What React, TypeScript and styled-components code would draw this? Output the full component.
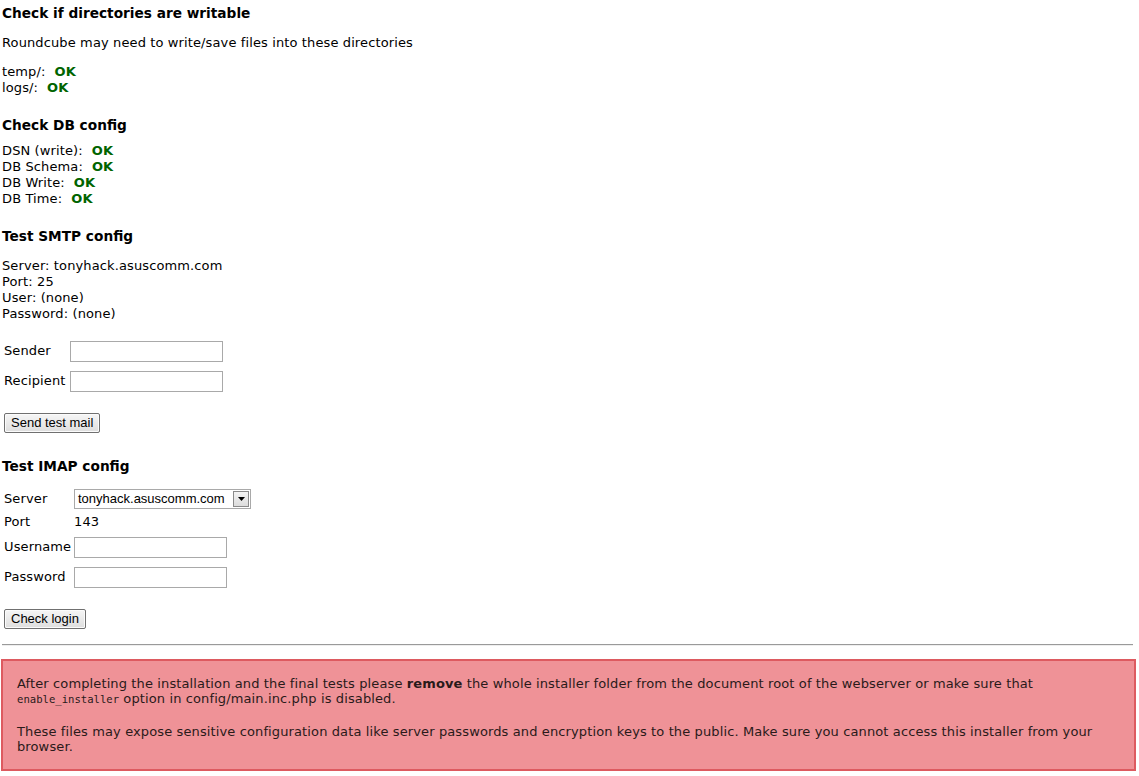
import React from "react";
import styled, { createGlobalStyle } from "styled-components";

const GlobalStyle = createGlobalStyle`
  html, body {
    margin: 0;
    padding: 0;
    background: #fff;
  }
  body {
    font-family: "DejaVu Sans", Verdana, sans-serif;
    font-size: 13px;
    letter-spacing: 0.12px;
    color: #000;
  }
`;

const Page = styled.div`
  padding: 0 2px 6px 1px;
`;

const Heading = styled.h3<{ $top: number; $bottom: number }>`
  margin: ${({ $top }) => $top}px 0 ${({ $bottom }) => $bottom}px 1px;
  font-size: 13.7px;
  letter-spacing: 0;
  line-height: 18px;
  font-weight: bold;
`;

const Para = styled.p<{ $bottom?: number }>`
  margin: 0 0 ${({ $bottom }) => $bottom ?? 0}px 1px;
  line-height: 16px;
`;

const Lines = styled.div`
  margin-left: 1px;
  line-height: 16px;
`;

const Ok = styled.span`
  color: #006400;
  font-weight: bold;
  margin-left: 9px;
`;

const FormTable = styled.table<{ $top: number }>`
  border-collapse: separate;
  border-spacing: 2px;
  margin-top: ${({ $top }) => $top}px;
  margin-left: 0;
`;

const LabelCell = styled.td<{ $w: number; $h: number }>`
  width: ${({ $w }) => $w}px;
  height: ${({ $h }) => $h}px;
  padding: 0 0 0 1px;
  vertical-align: middle;
  white-space: nowrap;
  line-height: 16px;
`;

const FieldCell = styled.td`
  padding: 0;
  vertical-align: middle;
  line-height: 16px;
`;

const TextInput = styled.input`
  box-sizing: border-box;
  width: 153px;
  height: 21px;
  border: 1px solid #a9a9a9;
  padding: 1px 3px;
  font-family: "Liberation Sans", Arial, sans-serif;
  font-size: 13px;
  margin: 0;
  background: #fff;
`;

const SelectBox = styled.div`
  display: inline-flex;
  align-items: center;
  box-sizing: border-box;
  width: 177px;
  height: 20px;
  border: 1px solid #a9a9a9;
  background: #fff;
  font-family: "Liberation Sans", Arial, sans-serif;
  font-size: 13px;
  letter-spacing: 0;
  padding-left: 3px;
  justify-content: space-between;
`;

const SelectArrow = styled.span`
  display: flex;
  align-items: center;
  justify-content: center;
  box-sizing: border-box;
  width: 16px;
  height: 16px;
  margin-right: 1px;
  border: 1px solid #8a8a8a;
  background: linear-gradient(#f4f4f4, #dcdcdc);
`;

const Button = styled.button<{ $top: number }>`
  display: block;
  margin: ${({ $top }) => $top}px 0 0 3px;
  height: 20px;
  padding: 0 6px;
  font-family: "Liberation Sans", Arial, sans-serif;
  font-size: 13px;
  letter-spacing: 0;
  color: #000;
  background: linear-gradient(#f6f6f6, #dedede);
  border: 1px solid #707070;
  border-radius: 2px;
  box-shadow: inset 0 0 0 1px #fbfbfb;
  line-height: 16px;
`;

const Rule = styled.hr`
  margin: 15px 4px 0 1px;
  border: 0;
  border-top: 1px solid #9a9a9a;
  border-bottom: 1px solid #eee;
`;

const Warning = styled.div`
  margin: 13px 0 0 0;
  box-sizing: border-box;
  width: 1135px;
  border: 2px solid #dd5a60;
  background: #ef9297;
  color: #2a1a1a;
  padding: 15px 28px 15px 14px;
  line-height: 15px;
`;

const WarnText = styled.p<{ $bottom?: number }>`
  margin: 0 0 ${({ $bottom }) => $bottom ?? 0}px 0;
`;

const Code = styled.code`
  font-family: "DejaVu Sans Mono", "Liberation Mono", monospace;
  font-size: 10.6px;
  letter-spacing: 0;
`;

const checks = {
  dirs: [
    ["temp/:", "OK"],
    ["logs/:", "OK"],
  ],
  db: [
    ["DSN (write):", "OK"],
    ["DB Schema:", "OK"],
    ["DB Write:", "OK"],
    ["DB Time:", "OK"],
  ],
};

export default function App() {
  return (
    <>
      <GlobalStyle />
      <Page>
        <Heading $top={4} $bottom={13}>Check if directories are writable</Heading>
        <Para $bottom={13}>Roundcube may need to write/save files into these directories</Para>
        <Lines>
          {checks.dirs.map(([k, v]) => (
            <div key={k}>
              {k}
              <Ok>{v}</Ok>
            </div>
          ))}
        </Lines>

        <Heading $top={20} $bottom={9}>Check DB config</Heading>
        <Lines>
          {checks.db.map(([k, v]) => (
            <div key={k}>
              {k}
              <Ok>{v}</Ok>
            </div>
          ))}
        </Lines>

        <Heading $top={20} $bottom={13}>Test SMTP config</Heading>
        <Lines>
          <div>Server: tonyhack.asuscomm.com</div>
          <div>Port: 25</div>
          <div>User: (none)</div>
          <div>Password: (none)</div>
        </Lines>

        <FormTable $top={13}>
          <tbody>
            <tr>
              <LabelCell $w={64} $h={28}>Sender</LabelCell>
              <FieldCell>
                <TextInput type="text" />
              </FieldCell>
            </tr>
            <tr>
              <LabelCell $w={64} $h={28}>Recipient</LabelCell>
              <FieldCell>
                <TextInput type="text" />
              </FieldCell>
            </tr>
          </tbody>
        </FormTable>

        <Button $top={16}>Send test mail</Button>

        <Heading $top={24} $bottom={12}>Test IMAP config</Heading>
        <FormTable $top={-2}>
          <tbody>
            <tr>
              <LabelCell $w={68} $h={23}>Server</LabelCell>
              <FieldCell>
                <SelectBox>
                  <span>tonyhack.asuscomm.com</span>
                  <SelectArrow>
                    <svg width="7" height="4" viewBox="0 0 7 4">
                      <path d="M0 0h7L3.5 4z" fill="#000" />
                    </svg>
                  </SelectArrow>
                </SelectBox>
              </FieldCell>
            </tr>
            <tr>
              <LabelCell $w={68} $h={19}>Port</LabelCell>
              <FieldCell>143</FieldCell>
            </tr>
            <tr>
              <LabelCell $w={68} $h={28}>Username</LabelCell>
              <FieldCell>
                <TextInput type="text" />
              </FieldCell>
            </tr>
            <tr>
              <LabelCell $w={68} $h={28}>Password</LabelCell>
              <FieldCell>
                <TextInput type="password" />
              </FieldCell>
            </tr>
          </tbody>
        </FormTable>

        <Button $top={16}>Check login</Button>

        <Rule />

        <Warning>
          <WarnText $bottom={17}>
            After completing the installation and the final tests please <b>remove</b> the whole
            installer folder from the document root of the webserver or make sure that{" "}
            <Code>enable_installer</Code> option in config/main.inc.php is disabled.
          </WarnText>
          <WarnText>
            These files may expose sensitive configuration data like server passwords and
            encryption keys to the public. Make sure you cannot access this installer from your
            browser.
          </WarnText>
        </Warning>
      </Page>
    </>
  );
}
